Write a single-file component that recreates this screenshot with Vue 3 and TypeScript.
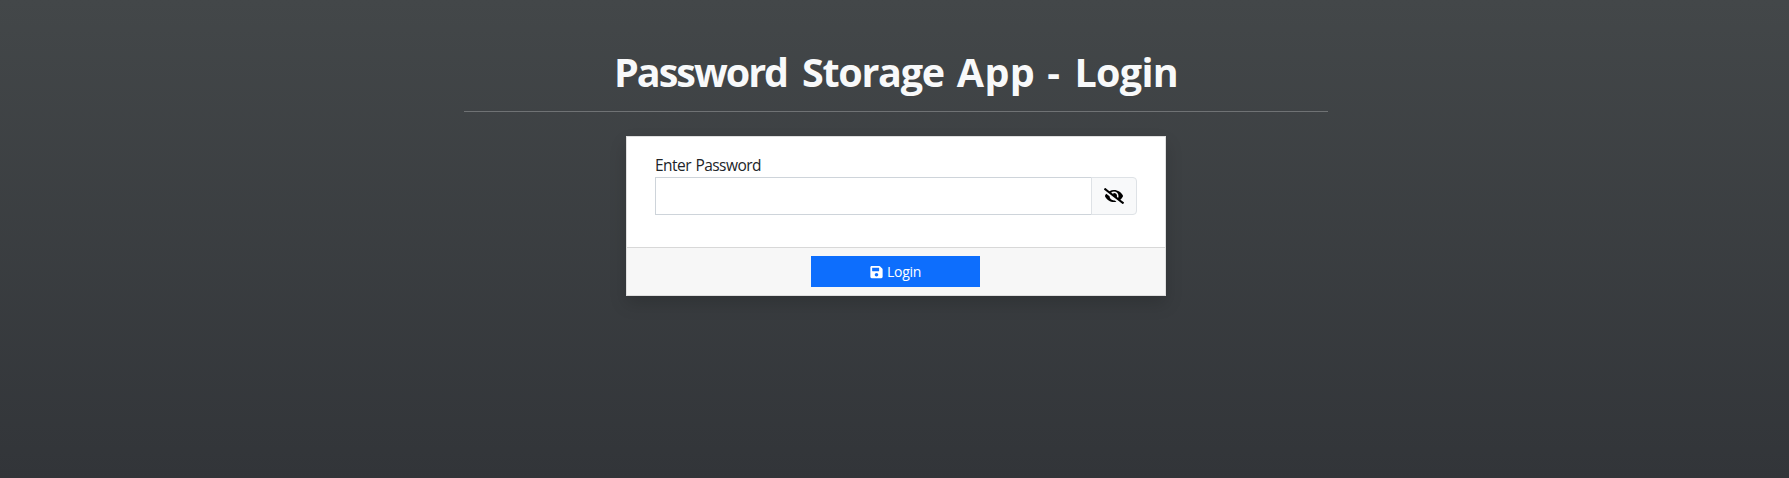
<script setup lang="ts">
import { ref } from 'vue'

const password = ref<string>('')
const visible = ref<boolean>(false)
</script>

<template>
  <main class="page">
    <header class="heading">
      <h1 class="title"><span class="word-password">Password</span> <span class="word-storage">Storage</span> <span class="word-app">App</span> <span class="dash">-</span> <span class="word-login">Login</span></h1>
    </header>
    <form class="card" @submit.prevent>
      <div class="card-body">
        <label class="label" for="password"><span>Enter Password</span></label>
        <div class="input-group">
          <input id="password" v-model="password" class="input" :type="visible ? 'text' : 'password'" />
          <button class="toggle" type="button" aria-label="Toggle password" @click="visible = !visible">
            <svg class="eye" viewBox="0 0 640 512" aria-hidden="true">
              <path d="M320 400c-75.85 0-137.25-58.71-142.9-133.11L72.2 185.82c-13.79 17.3-26.48 35.59-36.72 55.59a32.35 32.35 0 0 0 0 29.19C89.71 376.41 197.07 448 320 448c26.91 0 52.87-4 77.89-10.46L346 397.39a144.13 144.13 0 0 1-26 2.61zm313.82 58.1l-110.55-85.44a331.25 331.25 0 0 0 81.25-102.07 32.35 32.35 0 0 0 0-29.19C550.29 135.59 442.93 64 320 64a308.15 308.15 0 0 0-147.32 37.7L45.46 3.37A16 16 0 0 0 23 6.18L3.37 31.45A16 16 0 0 0 6.18 53.9l588.36 454.73a16 16 0 0 0 22.46-2.81l19.64-25.27a16 16 0 0 0-2.82-22.45zM450.19 314.64l-39.32-30.4A94.75 94.75 0 0 0 416 256a94.76 94.76 0 0 0-121.31-92.21A47.65 47.65 0 0 1 304 192a46.64 46.64 0 0 1-1.54 10l-73.64-56.91A142.31 142.31 0 0 1 320 112a143.92 143.92 0 0 1 144 144c0 21.63-5.29 41.79-13.81 60.07z" />
            </svg>
          </button>
        </div>
      </div>
      <div class="card-footer">
        <button class="submit" type="submit">
          <svg class="save" viewBox="0 0 448 512" aria-hidden="true">
            <path d="M433.941 129.941l-83.882-83.882A48 48 0 0 0 316.118 32H48C21.49 32 0 53.49 0 80v352c0 26.51 21.49 48 48 48h352c26.51 0 48-21.49 48-48V163.882a48 48 0 0 0-14.059-33.941zM224 416c-35.346 0-64-28.654-64-64 0-35.346 28.654-64 64-64s64 28.654 64 64c0 35.346-28.654 64-64 64zm96-304.52V212c0 6.627-5.373 12-12 12H76c-6.627 0-12-5.373-12-12V108c0-6.627 5.373-12 12-12h228.52c3.183 0 6.235 1.264 8.485 3.515l3.48 3.48A11.996 11.996 0 0 1 320 111.48z" />
          </svg>
          <span class="submit-text">Login</span>
        </button>
      </div>
    </form>
  </main>
</template>

<style>
body {
  margin: 0;
  overflow: hidden;
}
</style>

<style scoped>
* {
  box-sizing: border-box;
}
.page {
  height: 478px;
  padding: 48px 0 0 3px;
  display: flex;
  flex-direction: column;
  align-items: center;
  background: linear-gradient(#434749, #323539);
  color: #212529;
  font-family: "Open Sans", sans-serif;
}
.heading {
  width: 864px;
  height: 64px;
  flex: none;
  border-bottom: 1px solid #6f7274;
  text-align: center;
}
.title {
  margin: 0;
  color: #f8f9fa;
  font-size: 39.5px;
  font-weight: 700;
  line-height: 48px;
  letter-spacing: -1.45px;
  word-spacing: 5.5px;
  white-space: nowrap;
}
.word-password {
  letter-spacing: -2px;
  margin-right: 0.6px;
}
.word-storage {
  letter-spacing: -1.3px;
  margin-right: -1.2px;
}
.word-app {
  letter-spacing: 0.3px;
  margin-right: -2px;
}
.dash {
  margin-right: 1.5px;
}
.word-login {
  letter-spacing: -0.7px;
}
.card {
  width: 540px;
  height: 160px;
  margin-top: 24px;
  display: flex;
  flex-direction: column;
  background: #fff;
  border: 1px solid #dfdfdf;
  box-shadow: 0 8px 16px rgba(0, 0, 0, 0.15);
}
.card-body {
  height: 110px;
  padding: 16px 28px 0;
}
.label {
  display: block;
  height: 24px;
  font-size: 15.5px;
  line-height: 24px;
  letter-spacing: -0.55px;
  word-spacing: 1px;
  white-space: nowrap;
}
.input-group {
  display: flex;
  height: 38px;
}
.input {
  flex: 1;
  min-width: 0;
  padding: 6px 12px;
  border: 1px solid #ced4da;
  border-radius: 0;
  outline: 0;
  font: inherit;
}
.toggle {
  width: 46px;
  margin-left: -1px;
  padding: 0;
  display: flex;
  align-items: center;
  justify-content: center;
  background: #f8f9fa;
  border: 1px solid #dee2e6;
  border-radius: 0 4px 4px 0;
}
.eye {
  width: 20px;
  height: 16px;
  fill: #000;
}
.card-footer {
  flex: 1;
  padding: 8px 1px 0 0;
  display: flex;
  justify-content: center;
  align-items: flex-start;
  background: #f7f7f7;
  border-top: 1px solid #d8d8d8;
}
.submit {
  width: 169px;
  height: 31px;
  padding: 0;
  display: flex;
  align-items: center;
  justify-content: center;
  gap: 4px;
  background: #0d6efd;
  border: 0;
  color: #fff;
  font-family: inherit;
  font-size: 14px;
  line-height: 21px;
}
.submit-text {
  letter-spacing: -0.3px;
}
.save {
  width: 13px;
  height: 14px;
  fill: #fff;
}
</style>
